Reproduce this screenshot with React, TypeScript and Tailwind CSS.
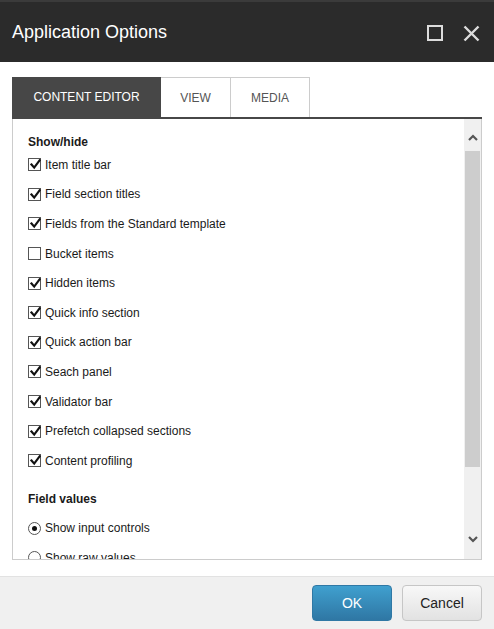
import React from "react";

const showHide: { label: string; checked: boolean }[] = [
  { label: "Item title bar", checked: true },
  { label: "Field section titles", checked: true },
  { label: "Fields from the Standard template", checked: true },
  { label: "Bucket items", checked: false },
  { label: "Hidden items", checked: true },
  { label: "Quick info section", checked: true },
  { label: "Quick action bar", checked: true },
  { label: "Seach panel", checked: true },
  { label: "Validator bar", checked: true },
  { label: "Prefetch collapsed sections", checked: true },
  { label: "Content profiling", checked: true },
];

function Checkbox({ checked }: { checked: boolean }) {
  return (
    <span className="relative block w-[13px] h-[13px] border border-[#555] bg-white shrink-0">
      {checked && (
        <svg
          className="absolute left-[1px] top-[0px]"
          width="11"
          height="11"
          viewBox="0 0 11 11"
        >
          <path
            d="M1.5 5.5 L4.2 8.6 L9.6 1.4"
            fill="none"
            stroke="#111"
            strokeWidth="2.2"
            strokeLinecap="square"
            strokeLinejoin="miter"
          />
        </svg>
      )}
    </span>
  );
}

function Radio({ checked }: { checked: boolean }) {
  return (
    <span className="flex items-center justify-center w-[13px] h-[13px] rounded-full border border-[#555] bg-white shrink-0">
      {checked && <span className="block w-[5px] h-[5px] rounded-full bg-[#111]" />}
    </span>
  );
}

export default function App() {
  return (
    <div
      className="w-[494px] h-[629px] flex flex-col bg-white overflow-hidden"
      style={{ fontFamily: '"Liberation Sans", Arial, sans-serif' }}
    >
      {/* Header */}
      <div className="h-[62px] shrink-0 bg-[#2b2b2b] border-t-2 border-[#3b3b3b] flex items-center pl-3 pr-[14px]">
        <div className="text-[18px] text-white flex-1 leading-none pb-[1px]">Application Options</div>
        <svg width="16" height="16" viewBox="0 0 16 16" className="mr-[20px] mt-[2px]">
          <rect x="1" y="1" width="14" height="14" fill="none" stroke="#dcdcdc" strokeWidth="2" />
        </svg>
        <svg width="17" height="17" viewBox="0 0 17 17" className="mt-[2px]">
          <path d="M1.5 1.5 L15.5 15.5 M15.5 1.5 L1.5 15.5" stroke="#dcdcdc" strokeWidth="2.4" />
        </svg>
      </div>

      {/* Body */}
      <div className="flex-1 flex flex-col px-3 pt-[15px]">
        {/* Tabs */}
        <div className="flex h-[42px] shrink-0 border-b-2 border-[#474747]">
          <div className="w-[149px] h-[40px] bg-[#474747] text-white text-[12px] flex items-center justify-center">
            CONTENT EDITOR
          </div>
          <div className="w-[70px] h-[40px] border-t border-r border-[#cccccc] text-[#555] text-[12px] flex items-center justify-center">
            VIEW
          </div>
          <div className="w-[79px] h-[40px] border-t border-r border-[#cccccc] text-[#555] text-[12px] flex items-center justify-center">
            MEDIA
          </div>
        </div>

        {/* Panel */}
        <div className="h-[441px] shrink-0 flex border-x border-b border-[#cccccc] overflow-hidden">
          <div className="flex-1 overflow-hidden pl-[15px] pt-[15px] text-[12px] text-[#1a1a1a]">
            <div className="h-[16px] leading-[16px] font-bold">Show/hide</div>
            {showHide.map((item) => (
              <div key={item.label} className="h-[29.6px] flex items-center gap-[4px]">
                <Checkbox checked={item.checked} />
                <span>{item.label}</span>
              </div>
            ))}
            <div className="h-[16px] leading-[16px] font-bold mt-[15px]">Field values</div>
            <div className="mt-[7px]">
              <div className="h-[29.6px] flex items-center gap-[4px]">
                <Radio checked={true} />
                <span>Show input controls</span>
              </div>
              <div className="h-[29.6px] flex items-center gap-[4px]">
                <Radio checked={false} />
                <span>Show raw values</span>
              </div>
            </div>
          </div>
          {/* Scrollbar */}
          <div className="w-[17px] shrink-0 bg-[#f0f0f0] flex flex-col items-center">
            <div className="h-[32px] flex items-center justify-center pt-[5px]">
              <svg width="10" height="7" viewBox="0 0 10 7">
                <path d="M1 6 L5 2 L9 6" fill="none" stroke="#555" strokeWidth="2.2" />
              </svg>
            </div>
            <div className="w-[15px] h-[316px] bg-[#cdcdcd]" />
            <div className="flex-1 flex items-end justify-center pb-[16px]">
              <svg width="10" height="7" viewBox="0 0 10 7">
                <path d="M1 1 L5 5 L9 1" fill="none" stroke="#555" strokeWidth="2.2" />
              </svg>
            </div>
          </div>
        </div>
      </div>

      {/* Footer */}
      <div className="h-[53px] shrink-0 bg-[#f0f0f0] border-t border-[#e2e2e2] flex justify-end items-start gap-[10px] pr-3 pt-[8px]">
        <button className="w-[80px] h-[36px] rounded-[4px] border border-[#2f78a5] bg-gradient-to-b from-[#40a0cf] to-[#2f77a4] text-white text-[14px]">
          OK
        </button>
        <button className="w-[80px] h-[36px] rounded-[4px] border border-[#c6c6c6] bg-gradient-to-b from-[#f8f8f8] to-[#e2e2e2] text-[#222] text-[14px]">
          Cancel
        </button>
      </div>
    </div>
  );
}
